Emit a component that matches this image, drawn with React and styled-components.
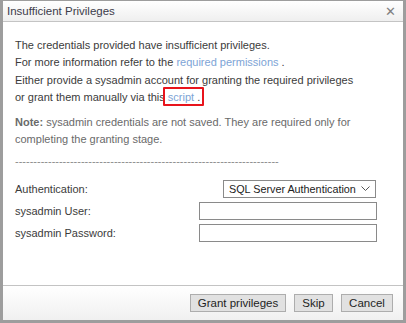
import React from "react";
import styled, { createGlobalStyle } from "styled-components";

const Global = createGlobalStyle`
  html, body { margin: 0; padding: 0; background: #fff; }
  body { font-family: "Liberation Sans", Arial, sans-serif; }
`;

const Frame = styled.div`
  width: 406px;
  height: 323px;
  box-sizing: border-box;
  background: #9d9d9d;
  padding: 1px 3px 3px 3px;
  display: flex;
  flex-direction: column;
`;

const TitleBar = styled.div`
  height: 20px;
  flex: none;
  display: flex;
  align-items: center;
  justify-content: space-between;
  padding: 0 7px 0 4px;
  background: linear-gradient(#ffffff, #efefef);
  border-bottom: 1px solid #c4c4c4;
  font-size: 11.5px;
  color: #3c3c4a;
`;

const Close = styled.span`
  font-size: 13px;
  color: #808080;
  line-height: 1;
`;

const Body = styled.div`
  flex: 1;
  background: #fff;
  padding: 15px 27px 0 12px;
  font-size: 11px;
  color: #3b3b3b;
`;

const Para = styled.p`
  margin: 0;
  line-height: 17.3px;
  color: ${(p) => p.$muted ? "#6a6a6a" : "#3b3b3b"};
  margin-bottom: ${(p) => p.$gap || 0}px;
`;

const Link = styled.span`
  color: #7da4d6;
`;

const Marked = styled.span`
  position: relative;
  &::after {
    content: "";
    position: absolute;
    left: -5px;
    right: -4px;
    top: -4px;
    bottom: -3px;
    border: 2px solid #e8141c;
    border-radius: 1px;
  }
`;

const Dashes = styled.div`
  color: #8a8a8a;
  line-height: 17px;
  margin: 4px 0 10px;
`;

const Form = styled.div`
  display: grid;
  grid-template-columns: 184px 1fr;
  row-gap: 4px;
  align-items: center;
`;

const Label = styled.div`
  color: #3b3b3b;
  line-height: 18px;
`;

const Select = styled.div`
  justify-self: end;
  width: 153px;
  height: 18px;
  box-sizing: border-box;
  border: 1px solid #8a8a8a;
  display: flex;
  align-items: center;
  justify-content: space-between;
  padding: 0 5px 0 5px;
  font-size: 10.8px;
  white-space: nowrap;
  color: #222;
  margin-right: 1px;
`;

const Input = styled.div`
  width: 178px;
  height: 18px;
  box-sizing: border-box;
  border: 1px solid #8a8a8a;
  justify-self: end;
  background: #fff;
`;

const Footer = styled.div`
  height: 35px;
  flex: none;
  box-sizing: border-box;
  border-top: 1px solid #c3c3c3;
  background: linear-gradient(#ffffff, #f0f0f0);
  display: flex;
  justify-content: flex-end;
  align-items: center;
  gap: 8px;
  padding: 0 10px 1px 0;
`;

const Button = styled.button`
  height: 18px;
  width: ${(p) => p.$w}px;
  padding: 0;
  box-sizing: border-box;
  border: 1px solid #adadad;
  background: #e1e1e1;
  font-family: "Liberation Sans", Arial, sans-serif;
  font-size: 11.5px;
  color: #1e1e1e;
`;

export default function App() {
  return (
    <>
      <Global />
      <Frame>
        <TitleBar>
          <span>Insufficient Privileges</span>
          <Close>✕</Close>
        </TitleBar>
        <Body>
          <Para $gap={8}>
            The credentials provided have insufficient privileges.<br />
            For more information refer to the <Link>required permissions</Link> .<br />
            Either provide a sysadmin account for granting the required privileges<br />
            or grant them manually via this <Marked><Link>script</Link> .</Marked>
          </Para>
          <Para $muted>
            <b>Note:</b> sysadmin credentials are not saved. They are required only for<br />
            completing the granting stage.
          </Para>
          <Dashes>{"-".repeat(72)}</Dashes>
          <Form>
            <Label>Authentication:</Label>
            <Select>
              <span>SQL Server Authentication</span>
              <svg width="9" height="6" viewBox="0 0 9 6">
                <path d="M0.5 0.5 L4.5 4.5 L8.5 0.5" fill="none" stroke="#555" strokeWidth="1" />
              </svg>
            </Select>
            <Label>sysadmin User:</Label>
            <Input />
            <Label>sysadmin Password:</Label>
            <Input />
          </Form>
        </Body>
        <Footer>
          <Button $w={96}>Grant privileges</Button>
          <Button $w={39}>Skip</Button>
          <Button $w={52}>Cancel</Button>
        </Footer>
      </Frame>
    </>
  );
}
